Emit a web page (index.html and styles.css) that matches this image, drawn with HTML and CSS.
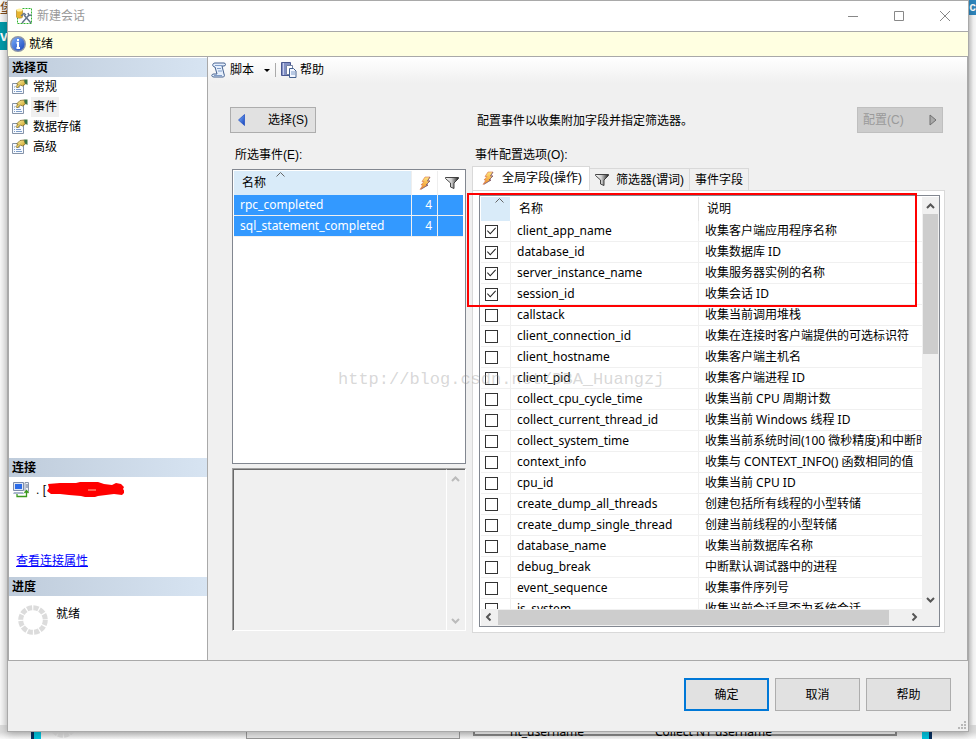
FILE: index.html
```html
<!DOCTYPE html>
<html lang="zh-CN">
<head>
<meta charset="utf-8">
<title>新建会话</title>
<link rel="stylesheet" href="styles.css">
</head>
<body>
<svg class="defs" width="0" height="0" aria-hidden="true">
  <defs>
    <linearGradient id="gold" x1="0" y1="0" x2="1" y2="1"><stop offset="0" stop-color="#fff3a8"/><stop offset="1" stop-color="#c79a18"/></linearGradient>
    <linearGradient id="metal" x1="0" x2="1"><stop offset="0" stop-color="#ffffff"/><stop offset=".45" stop-color="#d0d0d0"/><stop offset="1" stop-color="#222222"/></linearGradient>
    <linearGradient id="blue" x1="0" y1="0" x2="1" y2="1"><stop offset="0" stop-color="#7fb4ff"/><stop offset="1" stop-color="#1440b8"/></linearGradient>
    <linearGradient id="bolt-fill" x1="0" y1="0" x2="0" y2="1"><stop offset="0" stop-color="#ffe680"/><stop offset="1" stop-color="#f08a1c"/></linearGradient>
    <symbol id="i-page" viewBox="0 0 16 16">
      <path d="M.5 4.500h11v10H.5z" fill="#f8fbff" stroke="#8593a8"/>
      <path d="M2 8h1M2 10.500h1M2 12.500h1M4 8h4M4 10.500h5M4 12.500h6" stroke="#7c9cc8"/>
      <path d="M4.500 5L8 1.500 12 1l1.500 4-3 2-2-1-3 3L4 7.500 6 5.500z" fill="url(#gold)" stroke="#75601c" stroke-width=".7"/>
      <path d="M12 .5h3.500v5.500L13 4.500z" fill="#3d7445"/>
    </symbol>
    <symbol id="i-bolt" viewBox="0 0 12 14">
      <path d="M6 1h5L8.500 5H11L7 9h2L1 13.500 4 9H2l3-3.500H3z" fill="url(#bolt-fill)" stroke="#d8744a" stroke-width=".6"/>
      <path d="M11 1L8.500 5H11L7 9h2l-7 4.300" fill="none" stroke="#6f5a78" stroke-width=".7"/>
    </symbol>
    <symbol id="i-funnel" viewBox="0 0 14 12">
      <path d="M.5.500h13v1L9 6v5.500L5.500 10V6L.5 1.500z" fill="url(#metal)" stroke="#333" stroke-width=".9"/>
    </symbol>
    <symbol id="i-up" viewBox="0 0 9 6"><path d="M1 5l3.500-3.500L8 5" fill="none" stroke="currentColor" stroke-width="2"/></symbol>
    <symbol id="i-sort" viewBox="0 0 9 5"><path d="M.5 4.500l4-4 4 4" fill="none" stroke="currentColor"/></symbol>
    <symbol id="i-ring" viewBox="0 0 32 32">
      <circle cx="16" cy="16" r="12.300" fill="none" stroke="#dcdcdc" stroke-width="5" stroke-dasharray="5.200 1.240"/>
    </symbol>
  </defs>
</svg>

<div class="backdrop" aria-hidden="true">
  <div class="edge-left"><span class="glyph">堡</span><span class="teal">v</span></div>
  <div class="edge-right"><span>c</span></div>
  <div class="edge-bottom">
    <i class="bar bar-left"></i>
    <svg class="ring-behind"><use href="#i-ring"/></svg>
    <i class="pane pane-a"></i>
    <div class="pane pane-b"><span class="cell-a">nt_username</span><span class="cell-b">Collect NT username</span></div>
    <i class="bar bar-right"></i>
  </div>
</div>

<div class="window">
  <header class="titlebar">
    <svg class="app-icon" viewBox="0 0 16 16">
      <path d="M6.500.5h9v15h-14V10" fill="none" stroke="#2fb52f" stroke-dasharray="2 1"/>
      <path d="M.5 2v7c0 1.500 6 1.500 6 0V2z" fill="#e8b52e" stroke="#a67a14" stroke-width=".6"/>
      <ellipse cx="3.500" cy="2" rx="3" ry="1.500" fill="#fff0a0"/>
      <path d="M6 15l7-8M8 7l7 8" stroke="#64748a" stroke-width="1.500"/>
      <path d="M5 8l3-2.500 2 1.500M12 5l1 2.500 2.500-.5" fill="none" stroke="#64748a" stroke-width="1.500"/>
    </svg>
    <h1>新建会话</h1>
    <div class="controls">
      <button type="button" aria-label="最小化"><svg viewBox="0 0 12 12"><path d="M1 6.500h10"/></svg></button>
      <button type="button" aria-label="最大化"><svg viewBox="0 0 12 12"><path d="M1.500 1.500h9v9h-9z"/></svg></button>
      <button type="button" aria-label="关闭"><svg viewBox="0 0 12 12"><path d="M1 1l10 10M11 1L1 11"/></svg></button>
    </div>
  </header>

  <div class="status">
    <svg viewBox="0 0 16 16"><circle cx="8" cy="8" r="7.300" fill="url(#blue)" stroke="#8d95a8" stroke-width="1.400"/><path d="M8 3v2M6.500 6.800H8V12M6.500 12h3.500" stroke="#fff" stroke-width="2" fill="none"/></svg>
    <span>就绪</span>
  </div>

  <div class="body">
    <aside class="sidebar">
      <section class="pages">
        <h2>选择页</h2>
        <nav>
          <a href="#general"><svg><use href="#i-page"/></svg><span>常规</span></a>
          <a href="#events" aria-current="page"><svg><use href="#i-page"/></svg><span>事件</span></a>
          <a href="#storage"><svg><use href="#i-page"/></svg><span>数据存储</span></a>
          <a href="#advanced"><svg><use href="#i-page"/></svg><span>高级</span></a>
        </nav>
      </section>
      <section class="connection">
        <h2>连接</h2>
        <div class="server">
          <svg class="server-icon" viewBox="0 0 16 16">
            <path d="M.5.500h10v8H.5z" fill="#dfe6f2" stroke="#7d8cab"/><path d="M2 2h7v5H2z" fill="#2c6be8"/>
            <path d="M1 10h9l1 2H0z" fill="#a9b6cc"/><path d="M12 .5h3.500v9H12z" fill="#eef1f6" stroke="#8a96ab"/>
            <path d="M13 3h2M13 5h2" stroke="#5c6d8c"/><path d="M4 12v2.500h9.500V9M11.500 11l2-2.500 2 2.500" fill="none" stroke="#3c9a1e" stroke-width="1.300"/>
          </svg>
          <span>. [</span>
          <svg class="redaction" viewBox="0 0 78 18"><path d="M2 3l12-1 16 0 4-1h18l6 2 8 1 4-2 5 1 3 3-1 2 2 3-3 3-8-1-8 1-8 1-3 1H39l-4-1-12-1-9-1-9 0L1 10l2-3z" fill="#f00"/><path d="M42 9h8" stroke="#ffc0a0"/></svg>
        </div>
        <a class="link" href="#connection">查看连接属性</a>
      </section>
      <section class="progress">
        <h2>进度</h2>
        <div class="progress-row"><svg><use href="#i-ring"/></svg><span>就绪</span></div>
      </section>
    </aside>

    <main>
      <div class="toolbar">
        <button type="button"><svg viewBox="0 0 16 16"><path d="M4 1h9c2 0 2 3 0 3h-2l2 8c1 2 0 3-1 3H3c-3 0-3-3 0-3h3L4 5C1 5 1 1 4 1z" fill="#e6effc" stroke="#44618f"/><path d="M4 3.500h7M6 6.500h4M7 9h4M3 13.500h8" stroke="#7f9cc8"/></svg>脚本<i class="caret"></i></button>
        <button type="button"><svg viewBox="0 0 16 16"><path d="M.5.500h9v13h-9z" fill="#8290c4" stroke="#4a5890"/><path d="M2.500 1v12" stroke="#c5cdec"/><path d="M5.500 3.500h6v9h-6z" fill="#fff" stroke="#7583a4"/><path d="M8.500 6.500h4l2.500 2.500v6.500H8.500z" fill="#f2f6ff" stroke="#44618f"/><path d="M10 10h4M10 12h4" stroke="#7f9cc8"/></svg>帮助</button>
      </div>

      <div class="content">
        <div class="left">
          <button type="button" class="btn select-btn"><svg viewBox="0 0 7 12"><path d="M6.500.500v11L.5 6z" fill="url(#blue)" stroke="#2a55c4" stroke-width=".8"/></svg>选择(S)</button>
          <h3>所选事件(E):</h3>
          <div class="event-list">
            <table>
              <colgroup><col><col class="c-num"><col class="c-filter"></colgroup>
              <thead><tr>
                <th class="sorted">名称<svg class="sort"><use href="#i-sort"/></svg></th>
                <th><svg class="bolt" role="img" aria-label="操作"><use href="#i-bolt"/></svg></th>
                <th><svg class="funnel" role="img" aria-label="筛选器"><use href="#i-funnel"/></svg></th>
              </tr></thead>
              <tbody>
                <tr><td>rpc_completed</td><td>4</td><td></td></tr>
                <tr><td>sql_statement_completed</td><td>4</td><td></td></tr>
              </tbody>
            </table>
          </div>
          <div class="description">
            <textarea readonly aria-label="事件说明"></textarea>
            <div class="vbar off"><svg><use href="#i-up"/></svg><svg class="down"><use href="#i-up"/></svg></div>
          </div>
        </div>

        <div class="right">
          <div class="hint">
            <p>配置事件以收集附加字段并指定筛选器。</p>
            <button type="button" class="btn config-btn" disabled>配置(C)<svg viewBox="0 0 8 12"><path d="M1 1v10l6-5z" fill="#aaa" stroke="#707070"/></svg></button>
          </div>
          <h3>事件配置选项(O):</h3>
          <div class="tabs" role="tablist">
            <button type="button" role="tab" aria-selected="true"><svg class="bolt"><use href="#i-bolt"/></svg>全局字段(操作)</button>
            <button type="button" role="tab" aria-selected="false"><svg class="funnel"><use href="#i-funnel"/></svg>筛选器(谓词)</button>
            <button type="button" role="tab" aria-selected="false">事件字段</button>
          </div>
          <div class="tabpage">
            <div class="field-list">
              <div class="viewport">
                <table>
                  <colgroup><col class="c-check"><col class="c-name"><col></colgroup>
                  <thead><tr><th class="sorted"><svg class="sort"><use href="#i-sort"/></svg></th><th>名称</th><th>说明</th></tr></thead>
                  <tbody>
                    <tr><td><input type="checkbox" id="f1" checked></td><td><label for="f1">client_app_name</label></td><td>收集客户端应用程序名称</td></tr>
                    <tr><td><input type="checkbox" id="f2" checked></td><td><label for="f2">database_id</label></td><td>收集数据库 ID</td></tr>
                    <tr><td><input type="checkbox" id="f3" checked></td><td><label for="f3">server_instance_name</label></td><td>收集服务器实例的名称</td></tr>
                    <tr><td><input type="checkbox" id="f4" checked></td><td><label for="f4">session_id</label></td><td>收集会话 ID</td></tr>
                    <tr><td><input type="checkbox" id="f5"></td><td><label for="f5">callstack</label></td><td>收集当前调用堆栈</td></tr>
                    <tr><td><input type="checkbox" id="f6"></td><td><label for="f6">client_connection_id</label></td><td>收集在连接时客户端提供的可选标识符</td></tr>
                    <tr><td><input type="checkbox" id="f7"></td><td><label for="f7">client_hostname</label></td><td>收集客户端主机名</td></tr>
                    <tr><td><input type="checkbox" id="f8"></td><td><label for="f8">client_pid</label></td><td>收集客户端进程 ID</td></tr>
                    <tr><td><input type="checkbox" id="f9"></td><td><label for="f9">collect_cpu_cycle_time</label></td><td>收集当前 CPU 周期计数</td></tr>
                    <tr><td><input type="checkbox" id="f10"></td><td><label for="f10">collect_current_thread_id</label></td><td>收集当前 Windows 线程 ID</td></tr>
                    <tr><td><input type="checkbox" id="f11"></td><td><label for="f11">collect_system_time</label></td><td>收集当前系统时间(100 微秒精度)和中断时间</td></tr>
                    <tr><td><input type="checkbox" id="f12"></td><td><label for="f12">context_info</label></td><td>收集与 CONTEXT_INFO() 函数相同的值</td></tr>
                    <tr><td><input type="checkbox" id="f13"></td><td><label for="f13">cpu_id</label></td><td>收集当前 CPU ID</td></tr>
                    <tr><td><input type="checkbox" id="f14"></td><td><label for="f14">create_dump_all_threads</label></td><td>创建包括所有线程的小型转储</td></tr>
                    <tr><td><input type="checkbox" id="f15"></td><td><label for="f15">create_dump_single_thread</label></td><td>创建当前线程的小型转储</td></tr>
                    <tr><td><input type="checkbox" id="f16"></td><td><label for="f16">database_name</label></td><td>收集当前数据库名称</td></tr>
                    <tr><td><input type="checkbox" id="f17"></td><td><label for="f17">debug_break</label></td><td>中断默认调试器中的进程</td></tr>
                    <tr><td><input type="checkbox" id="f18"></td><td><label for="f18">event_sequence</label></td><td>收集事件序列号</td></tr>
                    <tr><td><input type="checkbox" id="f19"></td><td><label for="f19">is_system</label></td><td>收集当前会话是否为系统会话</td></tr>
                  </tbody>
                </table>
              </div>
              <div class="vbar"><svg><use href="#i-up"/></svg><i class="track"><i class="thumb"></i></i><svg class="down"><use href="#i-up"/></svg></div>
              <div class="hbar"><svg class="prev"><use href="#i-up"/></svg><i class="track"><i class="thumb"></i></i><svg class="next"><use href="#i-up"/></svg></div>
            </div>
            <div class="highlight"></div>
          </div>
        </div>
      </div>
    </main>
  </div>

  <footer>
    <button type="button" class="btn primary">确定</button>
    <button type="button" class="btn">取消</button>
    <button type="button" class="btn">帮助</button>
    <svg class="grip" viewBox="0 0 9 9"><path d="M6 0h2v2H6zM3 3h2v2H3zM6 3h2v2H6zM0 6h2v2H0zM3 6h2v2H3zM6 6h2v2H6z" fill="#b8b8b8"/></svg>
  </footer>
</div>
<div class="watermark">http://blog.csdn.net/DBA_Huangzj</div>
</body>
</html>
```
FILE: styles.css
```css
:root {
  --face: #f0f0f0;
  --line: #a9a9a9;
  --ui: "Liberation Sans", "Noto Sans CJK SC", sans-serif;
  --grid: "Noto Sans", "Noto Sans CJK SC", sans-serif;
}

* { box-sizing: border-box; }

body {
  display: flex;
  position: relative;
  height: 100vh;
  min-height: 600px;
  margin: 0;
  overflow: hidden;
  background: #f6f6f6;
  color: #000;
  font: 12px/20px var(--ui);
}

.defs { position: absolute; }
h1, h2, h3, p { margin: 0; font-size: 12px; font-weight: normal; }
svg { display: block; flex: none; }
button { font: inherit; color: inherit; }
table { width: 100%; border-collapse: separate; border-spacing: 0; table-layout: fixed; font-family: var(--grid); }
th, td { padding: 0; font-weight: normal; text-align: left; white-space: nowrap; overflow: hidden; }

/* Windows visible behind the dialog */
.backdrop > div { position: absolute; overflow: hidden; }
.edge-left { left: 0; top: 0; width: 8px; height: 100%; background: linear-gradient(90deg, #f8f8f8, #e8e8e8); }
.edge-left span { display: block; height: 22px; overflow: hidden; font-size: 14px; line-height: 16px; color: #7a4a20; }
.edge-left .teal { height: 28px; background: #0099a8; color: #fff; font-weight: bold; line-height: 28px; }
.edge-right { right: 0; top: 0; width: 9px; height: 100%; background: linear-gradient(90deg, #d0d0d0, #f8f8f8 70%); }
.edge-right span { display: block; height: 15px; background: #2e86bd; color: #fff; font-weight: bold; line-height: 15px; text-align: right; }
.edge-bottom { left: 0; right: 0; bottom: 0; height: 14px; background: linear-gradient(#dcdcdc 50%, #fafafa); }
.edge-bottom > * { position: absolute; top: 0; height: 14px; }
.bar { width: 10px; background: #00c4de; border-left: 3px solid #083060; }
.bar-left { left: 31px; }
.bar-right { right: 44px; border-left: 0; border-right: 3px solid #083060; }
.edge-bottom .ring-behind { left: 48px; top: -16px; width: 30px; height: 30px; }
.pane-a { left: 246px; width: 214px; border: 1px solid #999; background: #e8e8e8; }
.pane-b { left: 473px; width: 424px; border: solid #888; border-width: 0 2px 2px; background: #f4f4f4; line-height: 14px; font-family: var(--grid); }
.cell-a { position: absolute; left: 35px; }
.cell-b { position: absolute; left: 180px; }
.edge-bottom .pane-b { height: 11px; }

.window {
  position: relative;
  display: flex;
  flex: 1;
  flex-direction: column;
  min-width: 0;
  margin: 0 7px 7px;
  border: 1px solid var(--line);
  background: var(--face);
  box-shadow: 0 2px 8px #0004;
}

.titlebar { display: flex; align-items: center; height: 31px; padding: 0 0 1px 8px; background: #fff; border-bottom: 1px solid var(--line); color: #999; }
.app-icon { width: 16px; height: 16px; margin-right: 5px; }
.controls { display: flex; margin-left: auto; }
.controls button { display: grid; place-items: center; width: 46px; height: 28px; padding: 0; border: 0; background: none; }
.controls svg { width: 12px; height: 12px; fill: none; stroke: #888; }

.status { display: flex; align-items: center; gap: 3px; height: 25px; padding-left: 2px; background: #ffffe1; border-bottom: 1px solid var(--line); }
.status svg { width: 16px; height: 16px; }

.body { display: flex; flex: 1; min-height: 0; border-bottom: 1px solid var(--line); }

.sidebar { display: flex; flex: none; flex-direction: column; width: 200px; padding-top: 1px; background: #fff; border: solid var(--line); border-width: 0 1px; }
.sidebar h2 { height: 19px; padding-left: 3px; background: linear-gradient(90deg, #bfccdb, #d7e4f2); font-weight: bold; line-height: 21px; }
.pages { flex: 1; }
.pages a { display: flex; align-items: center; gap: 3px; height: 20px; padding-left: 3px; color: inherit; text-decoration: none; }
.pages svg { width: 16px; height: 16px; }
.pages span { padding: 0 2px; }
.pages [aria-current] span { background: var(--face); }
.connection { height: 119px; }
.server { display: flex; align-items: center; height: 26px; padding-left: 4px; }
.server-icon { width: 16px; height: 16px; margin-right: 7px; }
.redaction { width: 78px; height: 18px; }
.link { display: block; margin: 48px 0 0 7px; color: #00f; }
.progress { height: 83px; }
.progress-row { display: flex; gap: 7px; padding: 8px 0 0 8px; }
.progress svg { width: 32px; height: 32px; }

main { display: flex; flex: 1; flex-direction: column; min-width: 0; border-right: 1px solid var(--line); }
.toolbar { display: flex; align-items: center; height: 26px; padding-left: 3px; background: linear-gradient(#fff, var(--face)); }
.toolbar button { display: flex; align-items: center; gap: 3px; padding: 0; border: 0; background: none; }
.toolbar button + button { margin-left: 5px; padding-left: 5px; border-left: 1px solid #aaa; height: 14px; }
.toolbar svg { width: 16px; height: 16px; }
.caret { width: 0; margin-left: 7px; border: 3px solid transparent; border-top-color: #000; border-bottom: 0; }

.content { display: grid; flex: 1; grid-template-columns: 236px minmax(0, 1fr); gap: 6px; min-height: 0; padding: 24px 22px 27px; }
.left, .right { display: flex; flex-direction: column; min-height: 0; }
.left { padding-bottom: 2px; }

.btn { width: 85px; height: 33px; padding: 0; background: #e1e1e1; border: 1px solid #adadad; }
.btn.primary { border: 2px solid #0078d7; }
.select-btn, .config-btn { display: flex; flex: none; align-items: center; justify-content: space-between; width: 86px; height: 26px; padding: 0 7px; }
.select-btn svg { width: 7px; height: 12px; }
.config-btn { padding: 0 5px; background: #ccc; border-color: #bfbfbf; color: #9a9a9a; }
.config-btn svg { width: 8px; height: 12px; }
h3 { flex: none; padding-left: 5px; margin-top: 12px; }
.right h3 { padding-left: 3px; }

.event-list { flex: 1; margin: 4px 0 4px 2px; padding: 1px 2px 1px 1px; background: #fff; border: 1px solid #828790; }
.c-num, .c-filter { width: 26px; }
.event-list th, .field-list th { position: relative; height: 24px; font-family: var(--ui); }
.event-list th { padding-left: 8px; }
.event-list th + th { padding-left: 7px; border-left: 1px solid #eee; }
.event-list th + th + th { padding-left: 7px; }
.event-list td { height: 21px; padding: 0 6px; background: #39f; border: solid #f0f0f0; border-width: 0 0 1px 1px; color: #fff; }
.event-list td:first-child { border-left: 0; }
.event-list td + td { padding: 0 5px; text-align: right; }
.sorted { background: #d9ebf9; }
.sort { position: absolute; top: 1px; width: 9px; height: 5px; color: #666; }
.event-list .sort { left: 42px; }
.field-list .sort { left: 14px; }
.bolt { width: 12px; height: 14px; }
.funnel { width: 14px; height: 12px; }

.description { display: flex; flex: none; height: 163px; margin-left: 2px; border: 1px solid #a0a0a0; border-color: #a0a0a0 #fff #fff #a0a0a0; }
.description textarea { flex: 1; min-width: 0; padding: 3px; resize: none; background: var(--face); border: solid #696969; border-width: 1px 0 0 1px; outline: 0; }
.description .vbar { width: 19px; padding-right: 2px; border-top: 1px solid #696969; border-left: 1px solid #fff; }

.vbar { display: flex; flex-direction: column; justify-content: space-between; align-items: center; width: 17px; padding: 6px 0; background: var(--face); color: #555; }
.vbar svg, .hbar svg { width: 9px; height: 6px; }
.vbar.off { color: #bbb; }
.down { transform: rotate(180deg); }

.hint { display: flex; flex: none; align-items: center; justify-content: space-between; padding: 0 2px 0 5px; }
.hint p { padding-top: 2px; }
.tabs { display: flex; flex: none; align-items: flex-end; margin-top: 1px; }
.tabs button { display: flex; align-items: center; gap: 7px; height: 22px; padding: 0 5px; background: var(--face); border: 1px solid #d9d9d9; border-width: 1px 1px 0 0; }
.tabs [aria-selected="true"] { position: relative; height: 25px; gap: 8px; padding: 0 7px 2px 9px; margin-bottom: -1px; background: #fff; border-left-width: 1px; }
.tabpage { position: relative; flex: 1; min-height: 0; padding: 4px 4px 5px 6px; background: #fff; border: 1px solid #d9d9d9; }

.field-list { display: grid; grid-template: minmax(0, 1fr) 17px / minmax(0, 1fr) 17px; height: 100%; padding: 1px 0 0 1px; border: 1px solid #828790; }
.viewport { overflow: hidden; }
.c-check { width: 29px; }
.c-name { width: 188px; }
.field-list th + th { padding-left: 9px; }
.field-list th + th + th { padding-left: 8px; border-left: 1px solid #e5e5e5; }
.field-list td { height: 21px; padding-left: 6px; border: solid #f0f0f0; border-width: 0 0 1px 1px; }
.field-list td:first-child { padding-left: 4px; border-left: 0; }
.field-list input { position: relative; display: block; width: 13px; height: 13px; margin: 0; appearance: none; background: #fff; border: 1px solid #333; }
.field-list input:checked::after { content: ""; position: absolute; inset: 1px; background: #222; clip-path: polygon(0 50%, 8% 42%, 36% 72%, 92% 12%, 100% 20%, 36% 88%); }

.track { display: block; }
.field-list .vbar .track { flex: 1; width: 15px; margin: 5px 0; }
.vbar .thumb { display: block; height: 37%; background: #cdcdcd; }
.hbar { display: flex; grid-column: 1 / -1; align-items: center; padding: 0 20px 1px 3px; background: var(--face); color: #555; }
.hbar .track { flex: 1; height: 15px; margin: 0 5px; }
.hbar .thumb { display: block; width: 96%; height: 15px; background: #cdcdcd; }
.prev { transform: rotate(-90deg); }
.next { transform: rotate(90deg); }
.highlight { position: absolute; left: -6px; top: 2px; width: 450px; height: 114px; border: 2px solid #f00; pointer-events: none; }

footer { position: relative; display: flex; gap: 6px; justify-content: flex-end; height: 70px; padding: 17px 17px 0 0; }
.grip { position: absolute; right: 1px; bottom: 1px; width: 9px; height: 9px; }

.watermark { position: absolute; left: 338px; top: 370px; color: #8885; font: 17px/20px "Liberation Mono", monospace; pointer-events: none; }
```
